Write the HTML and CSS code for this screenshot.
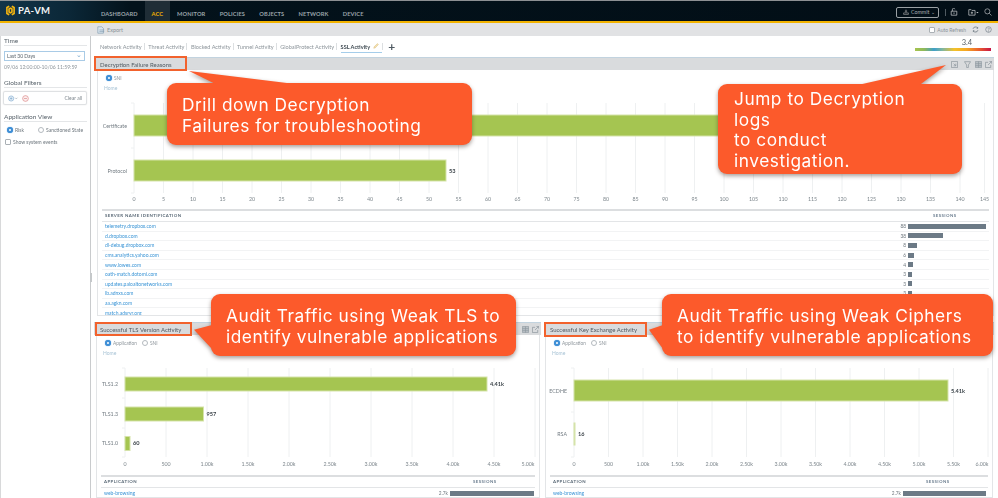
FILE: index.html
```html
<!DOCTYPE html>
<html lang="en">
<head>
<meta charset="utf-8">
<title>PA-VM ACC</title>
<link rel="stylesheet" href="styles.css">
</head>
<body>
<div class="app">
  <div class="ui">
    <header class="topbar">
      <div class="brand">
        <svg class="logo" viewBox="0 0 10 12"><path d="M3.6 1.2 1 2.7v6.6l2.6 1.5M6.4 1.2 9 2.7v6.6l-2.6 1.5M3.4 4.2 5 3.4l1.6.8v3.6L5 8.6l-1.6-.8z" fill="none" stroke="#f4b50f" stroke-width="1.8"/></svg>
        <span>PA-VM</span>
      </div>
      <nav class="nav">
        <a>DASHBOARD</a><a class="on">ACC</a><a>MONITOR</a><a>POLICIES</a><a>OBJECTS</a><a>NETWORK</a><a>DEVICE</a>
      </nav>
      <div class="top-actions">
        <span class="commit"><svg class="ic" viewBox="0 0 10 10"><path d="M5 1v5M3 3.5h4M1 6.5h8v2.5H1z" fill="none" stroke="#aaa" stroke-width="1"/></svg>Commit ⌄</span>
        <i class="bar"></i>
        <svg class="ic-top" viewBox="0 0 10 10"><path d="M1.5 4h7v5h-7zM3 4V2.2A1.5 1.5 0 0 1 6 1.6M5 5.5v2" fill="none" stroke="#c9ccce" stroke-width=".9"/></svg>
        <svg class="ic-top wide" viewBox="0 0 14 10"><path d="M1 2h3l1 1h4v6H1zM5 4.5v3M3.5 6h3" fill="none" stroke="#c9ccce" stroke-width=".9"/><path d="M10.500 5h3l-1.500 1.700z" fill="#c9ccce"/></svg>
        <svg class="ic-top last" viewBox="0 0 10 10"><circle cx="4.200" cy="4.200" r="3.200" fill="none" stroke="#b5b9bc" stroke-width=".9"/><path d="m6.600 6.600 2.800 2.800" stroke="#b5b9bc" stroke-width=".9"/></svg>
      </div>
    </header>
    <div class="toolbar">
      <div class="export"><svg class="ic-exp" viewBox="0 0 10 10"><path d="M1 1h5l2 2v6H1z" fill="#dbe6ef" stroke="#7e98ad" stroke-width=".8"/><path d="M3 5h6M3 7h6" stroke="#7e98ad" stroke-width=".8"/></svg>Export</div>
      <div class="refresh">
        <span class="check"></span><span>Auto Refresh</span>
        <svg class="ic-ref" viewBox="0 0 10 10"><path d="M1.500 4A3.600 3.600 0 0 1 8 3M8.500 6A3.600 3.600 0 0 1 2 7" fill="none" stroke="#5d6a74" stroke-width="1"/><path d="M8.700 1v2.500H6.200zM1.300 9V6.500h2.500z" fill="#5d6a74"/></svg>
        <svg class="ic-ref" viewBox="0 0 10 10"><circle cx="5" cy="5" r="4" fill="none" stroke="#5d6a74" stroke-width=".8"/><path d="M3.800 3.800Q5 2.500 6.200 3.600 6.500 4.800 5 5.500V6.500M5 7.200v.8" fill="none" stroke="#5d6a74" stroke-width=".7"/></svg>
      </div>
    </div>
    <div class="columns">
      <aside class="side">
        <h3>Time</h3>
        <div class="select"><span>Last 30 Days</span><span class="chev">⌄</span></div>
        <p class="date">09/06 12:00:00-10/06 11:59:59</p>
        <h3 class="gf">Global Filters</h3>
        <div class="filters">
          <svg class="fic" viewBox="0 0 14 8"><circle cx="4" cy="4" r="3.300" fill="#e4edf5" stroke="#6f9fc9" stroke-width=".7"/><path d="M2.500 4h3M4 2.500v3" stroke="#6f9fc9" stroke-width=".7"/><path d="m9 3 1.500 1.500L12 3" fill="none" stroke="#7d8b95" stroke-width=".6"/></svg>
          <svg class="fic small" viewBox="0 0 8 8"><circle cx="4" cy="4" r="3.300" fill="#fbeeee" stroke="#d98080" stroke-width=".7"/><path d="M2.300 4h3.400" stroke="#d98080" stroke-width=".7"/></svg>
          <span class="clear">Clear all</span>
        </div>
        <h3 class="av">Application View</h3>
        <div class="opts">
          <span class="radio on"></span><span class="risk">Risk</span>
          <span class="radio"></span><span>Sanctioned State</span>
        </div>
        <div class="opts sys"><span class="check"></span><span>Show system events</span></div>
        <span class="handle"></span>
      </aside>
      <main class="main">
        <div class="tabsrow">
          <div class="tabs">
            <a>Network Activity</a><a>Threat Activity</a><a>Blocked Activity</a><a>Tunnel Activity</a><a>GlobalProtect Activity</a>
            <a class="on">SSL Activity <svg class="pencil" viewBox="0 0 8 8"><path d="M1 7l.500-2L6 .800 7.200 2 3 6.500z" fill="#f3e3b4" stroke="#d6b670" stroke-width=".6"/></svg></a>
            <b class="plus">+</b>
          </div>
          <div class="gauge">
            <span>3.4</span>
            <i class="ramp"></i>
          </div>
        </div>

        <section class="panel">
          <div class="phead">
            <span class="ptitle">Decryption Failure Reasons</span>
            <div class="picons">
              <svg class="first" viewBox="0 0 8 8"><path d="M.500.500h7v7h-7zM3 3l2.500 2.500M5.500 3v2.500H3" fill="none" stroke="#8b959c" stroke-width=".8"/></svg>
              <svg viewBox="0 0 8 8"><path d="M.500.800h7L5 4.500v3H3v-3z" fill="none" stroke="#8b959c" stroke-width=".8"/></svg>
              <svg viewBox="0 0 8 8"><path d="M.500.500h7v7h-7zM.500 3h7M.500 5.300h7M4 .500v7" fill="#b9bfc4" stroke="#8b959c" stroke-width=".7"/></svg>
              <svg viewBox="0 0 8 8"><path d="M6.500 4.500v3h-6v-6h3M3.500 4.500 7.500.500M5 .500h2.500V3" fill="none" stroke="#8b959c" stroke-width=".8"/></svg>
            </div>
          </div>
          <div class="pbody top">
            <div class="radios"><span class="radio on"></span><span>SNI</span></div>
            <div class="home">Home</div>
            <svg class="chart top" viewBox="1 0 895 116">
              <g class="grid">
                <path d="M37 10v90h-3M37 10h-3M37 55h-3M66.500 10v90M96 10v90M125.500 10v90M155 10v90M184.500 10v90M214 10v90M243.500 10v90M273 10v90M302.500 10v90M332 10v90M361.500 10v90M391 10v90M420.500 10v90M450 10v90M479.500 10v90M509 10v90M538.500 10v90M568 10v90M597.500 10v90M627 10v90M656.500 10v90M686 10v90M715.500 10v90M745 10v90M774.500 10v90M804 10v90M833.500 10v90M863 10v90M887.500 10v90"/>
              </g>
              <rect class="bgbar" x="37" y="22" width="800" height="21"/>
              <rect class="bgbar" x="37" y="67" width="312" height="21"/>
              <text class="yl" x="30" y="35">Certificate</text>
              <text class="yl" x="30" y="80">Protocol</text>
              <text class="val" x="352" y="80">53</text>
              <g class="xl">
                <text x="37" y="108">0</text><text x="66.500" y="108">5</text><text x="96" y="108">10</text><text x="125.500" y="108">15</text><text x="155" y="108">20</text><text x="184.500" y="108">25</text><text x="214" y="108">30</text><text x="243.500" y="108">35</text><text x="273" y="108">40</text><text x="302.500" y="108">45</text><text x="332" y="108">50</text><text x="361.500" y="108">55</text><text x="391" y="108">60</text><text x="420.500" y="108">65</text><text x="450" y="108">70</text><text x="479.500" y="108">75</text><text x="509" y="108">80</text><text x="538.500" y="108">85</text><text x="568" y="108">90</text><text x="597.500" y="108">95</text><text x="627" y="108">100</text><text x="656.500" y="108">105</text><text x="686" y="108">110</text><text x="715.500" y="108">115</text><text x="745" y="108">120</text><text x="774.500" y="108">125</text><text x="804" y="108">130</text><text x="833.500" y="108">135</text><text x="863" y="108">140</text><text x="887.500" y="108">145</text>
              </g>
            </svg>
            <div class="table big">
              <div class="thead"><span>SERVER NAME IDENTIFICATION</span><span class="sess">SESSIONS</span></div>
              <div class="row"><a>telemetry.dropbox.com</a><span class="num">88</span><span class="track"><i class="fill" style="width:78px"></i></span></div>
              <div class="row"><a>d.dropbox.com</a><span class="num">38</span><span class="track"><i class="fill" style="width:35px"></i></span></div>
              <div class="row"><a>dl-debug.dropbox.com</a><span class="num">8</span><span class="track"><i class="fill" style="width:9px"></i></span></div>
              <div class="row"><a>cms.analytics.yahoo.com</a><span class="num">6</span><span class="track"><i class="fill" style="width:6px"></i></span></div>
              <div class="row"><a>www.lowes.com</a><span class="num">4</span><span class="track"><i class="fill" style="width:5px"></i></span></div>
              <div class="row"><a>oath-match.dotomi.com</a><span class="num">3</span><span class="track"><i class="fill" style="width:4px"></i></span></div>
              <div class="row"><a>updates.paloaltonetworks.com</a><span class="num">3</span><span class="track"><i class="fill" style="width:4px"></i></span></div>
              <div class="row"><a>lb.adnxs.com</a><span class="num">3</span><span class="track"><i class="fill" style="width:4px"></i></span></div>
              <div class="row"><a>aa.agkn.com</a></div>
              <div class="row"><a>match.adsrvr.org</a></div>
            </div>
          </div>
        </section>

        <div class="pair">
          <section class="panel half">
            <div class="phead">
              <span class="ptitle">Successful TLS Version Activity</span>
              <div class="picons">
                <svg viewBox="0 0 8 8"><path d="M.500.500h7v7h-7zM.500 3h7M.500 5.300h7M4 .500v7" fill="#b9bfc4" stroke="#8b959c" stroke-width=".7"/></svg>
                <svg viewBox="0 0 8 8"><path d="M6.500 4.500v3h-6v-6h3M3.500 4.500 7.500.500M5 .500h2.500V3" fill="none" stroke="#8b959c" stroke-width=".8"/></svg>
              </div>
            </div>
            <div class="pbody low">
              <div class="radios"><span class="radio on"></span><span>Application</span><span class="radio"></span><span>SNI</span></div>
              <div class="home">Home</div>
              <svg class="chart low" viewBox="0 0 442 117">
                <g class="grid">
                  <path d="M28 10v89h-3M28 10h-3M28 40h-3M28 70h-3M69 10v89M110 10v89M151 10v89M192 10v89M233 10v89M274 10v89M315 10v89M356 10v89M397 10v89M438 10v89"/>
                </g>
                <rect class="bgbar" x="28" y="19" width="362" height="14"/>
                <rect class="bgbar" x="28" y="49" width="78.500" height="14"/>
                <rect class="bgbar" x="28" y="78.500" width="5" height="14"/>
                <text class="yl" x="21" y="28">TLS1.2</text><text class="yl" x="21" y="58">TLS1.3</text><text class="yl" x="21" y="87">TLS1.0</text>
                <text class="val" x="393" y="28">4.41k</text><text class="val" x="109.500" y="58">957</text><text class="val" x="36" y="87">60</text>
                <g class="xl">
                  <text x="28" y="108">0</text><text x="69" y="108">500</text><text x="110" y="108">1.00k</text><text x="151" y="108">1.50k</text><text x="192" y="108">2.00k</text><text x="233" y="108">2.50k</text><text x="274" y="108">3.00k</text><text x="315" y="108">3.50k</text><text x="356" y="108">4.00k</text><text x="397" y="108">4.50k</text><text x="431" y="108">5.00k</text>
                </g>
              </svg>
              <div class="table">
                <div class="thead"><span>APPLICATION</span><span class="sess">SESSIONS</span></div>
                <div class="row"><a>web-browsing</a><span class="num">2.7k</span><span class="track"><i class="fill" style="width:84px"></i></span></div>
              </div>
            </div>
          </section>
          <section class="panel half second">
            <div class="phead">
              <span class="ptitle">Successful Key Exchange Activity</span>
            </div>
            <div class="pbody low">
              <div class="radios"><span class="radio on"></span><span>Application</span><span class="radio"></span><span>SNI</span></div>
              <div class="home">Home</div>
              <svg class="chart low" viewBox="0 0 446 117">
                <g class="grid">
                  <path d="M28 10v89h-3M28 10h-3M28 54h-3M62.500 10v89M97 10v89M131.500 10v89M166 10v89M200.500 10v89M235 10v89M269.500 10v89M304 10v89M338.500 10v89M373 10v89M407.500 10v89M442 10v89"/>
                </g>
                <rect class="bgbar" x="28" y="22" width="374" height="21"/>
                <rect class="bgbar" x="28" y="65" width="1" height="22"/>
                <text class="yl" x="21" y="35">ECDHE</text><text class="yl" x="21" y="78">RSA</text>
                <text class="val" x="405" y="35">5.41k</text><text class="val" x="32" y="78">16</text>
                <g class="xl">
                  <text x="28" y="108">0</text><text x="62.500" y="108">500</text><text x="97" y="108">1.00k</text><text x="131.500" y="108">1.50k</text><text x="166" y="108">2.00k</text><text x="200.500" y="108">2.50k</text><text x="235" y="108">3.00k</text><text x="269.500" y="108">3.50k</text><text x="304" y="108">4.00k</text><text x="338.500" y="108">4.50k</text><text x="373" y="108">5.00k</text><text x="407.500" y="108">5.50k</text><text x="436" y="108">6.00k</text>
                </g>
              </svg>
              <div class="table">
                <div class="thead"><span>APPLICATION</span><span class="sess">SESSIONS</span></div>
                <div class="row"><a>web-browsing</a><span class="num">2.7k</span><span class="track"><i class="fill" style="width:83px"></i></span></div>
              </div>
            </div>
          </section>
        </div>
      </main>
    </div>
  </div>

  <span class="mark m1"></span>
  <span class="mark m2"></span>
  <span class="mark m3"></span>

  <div class="callout c1"><i class="tail"></i>Drill down Decryption<br>Failures for troubleshooting</div>
  <div class="callout c2"><i class="tail"></i>Jump to Decryption<br>logs<br>to conduct<br>investigation.</div>
  <div class="callout c3"><i class="tail"></i>Audit Traffic using Weak TLS to<br>identify vulnerable applications</div>
  <div class="callout c4"><i class="tail"></i>Audit Traffic using Weak Ciphers<br>to identify vulnerable applications</div>
</div>
</body>
</html>
```

FILE: styles.css
```css
* { box-sizing: border-box; }
html, body { margin: 0; padding: 0; background: #fff; }
body { width: 998px; height: 498px; overflow: hidden; font-family: Lato, "Open Sans", sans-serif; color: #5d6770; }
.app { position: relative; width: 998px; height: 498px; overflow: hidden; }
.ui { width: 998px; height: 498px; filter: blur(.35px); border-top: 1px solid #8d9093; }
a { color: inherit; text-decoration: none; }

/* top bar */
.topbar { height: 22px; display: flex; align-items: stretch; border-bottom: 2px solid #f2b300; background: linear-gradient(90deg, #123449 0, #0b2737 70px, #03121b 130px, #020e16 100%); }
.brand { width: 101px; display: flex; align-items: center; gap: 3px; padding: 0 0 2px 6px; color: #f2f4f5; font-size: 9.500px; font-weight: 700; letter-spacing: .3px; }
.logo { width: 9px; height: 11px; }
.nav { display: flex; align-items: stretch; font-size: 5.700px; font-weight: 700; letter-spacing: .1px; color: #9aa3a9; }
.nav a { display: flex; align-items: flex-end; padding: 0 0 4px; margin-right: 14.300px; }
.nav a.on { background: #1f2d36; color: #f2b300; padding: 0 7px 4px; margin: 0 7px 0 -7.500px; }
.top-actions { margin-left: auto; display: flex; align-items: center; padding: 2px 6px 0 0; }
.commit { display: flex; align-items: center; gap: 2px; height: 11px; width: 43px; margin-right: 6px; border: 1px solid #9aa0a4; border-radius: 2px; padding-left: 6px; font-size: 5.300px; color: #a9afb3; white-space: nowrap; }
.ic { width: 6px; height: 6px; flex: none; }
.bar { width: 1px; height: 7px; background: #4f5a61; margin-right: 4px; }
.ic-top { width: 8px; height: 8px; margin-right: 10px; }
.ic-top.wide { width: 11px; margin-right: 5px; }
.ic-top.last { margin-right: 0; }

/* tool bar */
.toolbar { height: 13px; background: #e1e2e4; display: flex; align-items: center; justify-content: space-between; padding: 0 6px 0 97px; font-size: 5px; color: #8a9298; }
.export { display: flex; align-items: center; gap: 2px; font-size: 5.500px; }
.ic-exp { width: 8px; height: 8px; }
.refresh { display: flex; align-items: center; gap: 2px; }
.ic-ref { width: 7px; height: 7px; margin-left: 4px; }
.check { display: inline-block; width: 6px; height: 6px; background: #fff; border: 1px solid #aab0b5; border-radius: 1px; }

/* layout */
.columns { display: flex; height: 462px; }
.side { position: relative; width: 91px; flex: none; padding: 0 3px; border-right: 1px solid #c9cbcd; border-left: 1px solid #d8d9da; font-size: 5px; color: #6d767d; }
.side h3 { margin: 0; height: 9px; font-size: 6.500px; line-height: 9px; font-weight: 400; color: #59636b; box-shadow: 0 1px 0 #e4e6e8; }
.select { display: flex; justify-content: space-between; align-items: center; height: 10px; margin-top: 6px; padding: 0 2px; width: 81px; border: 1px solid #a9cbe6; font-size: 5px; color: #59636b; }
.chev { color: #79a9cf; line-height: 5px; height: 8px; font-size: 7px; }
.date { margin: 3px 0 0; font-size: 5.100px; line-height: 7px; color: #8d959b; white-space: nowrap; }
.gf { margin-top: 7px !important; }
.filters { display: flex; align-items: center; gap: 1px; width: 84px; height: 14px; margin: 4px 0 0 -1px; padding: 0 4px; border: 1px solid #dfe1e3; border-radius: 2px; box-shadow: 0 0 1px #ccc; }
.fic { width: 11px; height: 7px; }
.fic.small { width: 7px; margin-left: 2px; }
.clear { margin-left: auto; color: #7b848b; }
.av { margin-top: 7px !important; }
.opts { display: flex; align-items: center; height: 8px; margin-top: 5px; gap: 2px; padding-left: 3px; font-size: 5px; white-space: nowrap; }
.risk { width: 21px; }
.sys { margin-top: 4px; padding-left: 1px; }
.handle { position: absolute; right: -2px; top: 237px; width: 2px; height: 9px; background: #c5c8ca; }
.radio { display: inline-block; flex: none; width: 6px; height: 6px; border-radius: 50%; background: #fff; border: 1px solid #b3b9be; }
.radio.on { background: #fff; border: 2px solid #3f8fd6; box-shadow: 0 0 1px #3f8fd6; }

.main { flex: 1; min-width: 0; padding: 0 4px 0 3px; }
.tabsrow { height: 21px; display: flex; justify-content: space-between; padding-left: 6px; }
.tabs { display: flex; align-items: flex-start; padding-top: 6px; font-size: 5.600px; color: #8d959b; white-space: nowrap; }
.tabs a { position: relative; height: 11px; line-height: 9px; padding-right: 3px; margin-right: 3.500px; }
.tabs a::after { content: ""; position: absolute; right: 0; top: 1px; width: 1px; height: 7px; background: #dcdfe1; }
.tabs a.on { color: #3f4a52; font-weight: 700; border-bottom: 1px solid #a5cdea; padding-right: 12px; margin-right: 5px; }
.tabs a.on::after { right: -1px; }
.pencil { position: absolute; right: 3px; top: 1px; width: 6px; height: 6px; }
.plus { font-size: 12px; line-height: 9px; color: #4f5a62; margin-left: 1px; font-weight: 700; }
.gauge { width: 76px; margin-right: 3px; padding-top: 2px; display: flex; flex-direction: column; align-items: center; gap: 1px; font-size: 7.500px; line-height: 9px; color: #555e66; }
.gauge span { margin-left: 28px; }
.ramp { display: block; width: 76px; height: 3px; background: linear-gradient(90deg, #a6c44f 0, #8fb95a 12%, #3f9fc9 25%, #7fb6a0 36%, #f3c12a 52%, #f5a623 68%, #ea5f2e 84%, #c81446 100%); }

.panel { min-width: 0; }
.phead { height: 13px; display: flex; align-items: center; justify-content: space-between; padding: 1px 2px 0 6px; background: #d9dbdd; box-shadow: inset 0 1px 0 #c2d3df; font-size: 6px; color: #4f5a62; }
.ptitle { white-space: nowrap; }
.picons { display: flex; gap: 3.500px; }
.picons svg { width: 7px; height: 7px; }
.picons .first { margin-right: 3px; }
.pbody { margin-left: 3px; border: 1px solid #e3e5e7; border-top: 0; overflow: hidden; }
.pbody.top { height: 246px; }
.pbody.low { height: 163px; margin-left: 2px; margin-right: 1px; }
.second .pbody.low { margin-left: 1px; }
.radios { display: flex; align-items: center; gap: 2px; height: 10px; margin-top: 3px; padding-left: 8px; font-size: 4.800px; color: #8d959b; }
.radios .radio + span + .radio { margin-left: 3px; }
.home { height: 10px; line-height: 10px; padding-left: 6px; font-size: 5px; color: #a9c4d6; }
.chart { display: block; }
.chart.top { width: 895px; height: 116px; }
.chart.low { width: 100%; height: 117px; }
.grid path { fill: none; stroke: #eef0f1; stroke-width: 1; }
.bgbar { fill: #a5c551; stroke: #d5e3a9; stroke-width: 1; }
.yl { font-size: 5.300px; fill: #737c83; text-anchor: end; }
.val { font-size: 5.600px; font-weight: 700; fill: #3a4248; }
.xl text { font-size: 5.300px; fill: #7e878d; text-anchor: middle; }

.table { margin: 0 4px; border-top: 2px solid #dcdee0; }
.thead { display: flex; justify-content: space-between; height: 11px; line-height: 10px; padding-left: 3px; font-size: 4.400px; font-weight: 700; letter-spacing: .4px; color: #5c6b78; border-bottom: 1px solid #e3e5e7; }
.sess { color: #6f8092; width: 56px; }
.row { display: flex; align-items: center; height: 9.600px; padding-left: 3px; font-size: 5px; border-bottom: 1px solid #f2f3f4; }
.row a { flex: 1; color: #3b95d6; }
.num { font-size: 4.800px; color: #6d767d; padding-right: 2px; }
.track { display: flex; width: 81px; flex: none; }
.fill { display: block; height: 5px; background: #6c7a86; }
.half .table .sess { width: 62px; }
.half .track { width: 85px; }
.half .row { height: 11px; }

.pair { display: grid; grid-template-columns: 447px 450px; gap: 3px; margin-top: 6px; }

/* annotations */
.mark { position: absolute; border: 2px solid #f2622d; }
.m1 { left: 94px; top: 56px; width: 93px; height: 15px; }
.m2 { left: 95px; top: 322px; width: 97px; height: 14px; }
.m3 { left: 544px; top: 322px; width: 103px; height: 15px; }

.callout { position: absolute; background: #fc5a2b; border-radius: 9px; color: #fff; font-family: Inter, "Open Sans", sans-serif; font-size: 17.300px; line-height: 21px; letter-spacing: .55px; font-weight: 400; white-space: nowrap; filter: drop-shadow(0 2px 2px rgba(60, 40, 30, .45)); }
.tail { position: absolute; display: block; background: #fc5a2b; }
.c1 { left: 167px; top: 83px; width: 305px; height: 62px; padding: 11px 0 0 15px; }
.c1 .tail { left: 22px; top: -12px; width: 106px; height: 13px; clip-path: polygon(0 0, 100% 100%, 25% 100%); }
.c2 { left: 718px; top: 84px; width: 244px; height: 90px; padding: 5px 0 0 16px; line-height: 20.700px; }
.c2 .tail { left: 140px; top: -19px; width: 88px; height: 20px; clip-path: polygon(100% 0, 70% 100%, 0 100%); }
.c3 { left: 211px; top: 294px; width: 305px; height: 62px; padding: 11px 0 0 15px; }
.c3 .tail { left: -17px; top: 31px; width: 18px; height: 24px; clip-path: polygon(0 20%, 100% 0, 100% 100%); }
.c4 { left: 662px; top: 294px; width: 331px; height: 62px; padding: 11px 0 0 15px; }
.c4 .tail { left: -13px; top: 31px; width: 14px; height: 24px; clip-path: polygon(0 20%, 100% 0, 100% 100%); }
```
